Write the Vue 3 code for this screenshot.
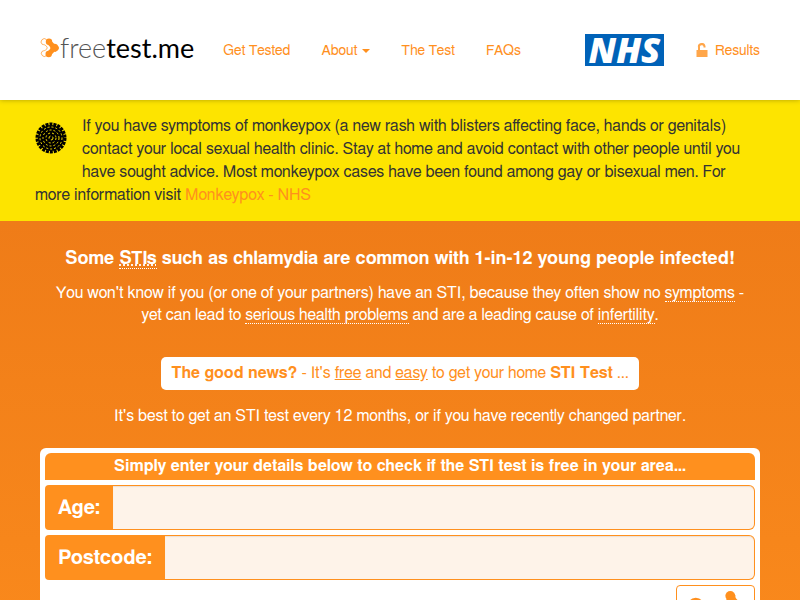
<template>
  <div class="page">
    <header class="navbar">
      <a class="brand" href="#" aria-label="freetest.me">
        <svg class="mark" viewBox="0 0 20 20" aria-hidden="true">
          <path class="outline" d="M6.500 1.500A3 3 0 1 0 2.200 6.300C4.500 7 5 6.500 6 8c1.500.6 1.700 2.900 0 3.600-1 1.200-1.500.9-3.600 1.500a3 3 0 1 0 4 4.600" />
          <path class="link" d="M9 4l5.500 6L8.700 16" />
          <circle cx="9" cy="3.700" r="3.200" />
          <circle cx="14.300" cy="9.800" r="4" />
          <circle cx="8.700" cy="16" r="3.200" />
          <path d="M15 6l3.500 2.500q1 1.500 0 3L15 14z" />
        </svg>
        <span class="wordmark"><span class="thin">free</span>test.me</span>
      </a>
      <nav class="menu">
        <a v-for="item in menu" :key="item.label" href="#">{{ item.label }}<span v-if="item.dropdown" class="caret"></span></a>
      </nav>
      <div class="account">
        <a class="nhs" href="#">NHS</a>
        <a class="results" href="#">
          <svg viewBox="0 0 12 14" aria-hidden="true">
            <path d="M2 7V4.500a3.500 3.500 0 0 1 7.500-1.500v1.500h-2V3.600A1.800 1.800 0 0 0 4 4.500V7h7.500v7H.5V7z" />
          </svg>
          <span>Results</span>
        </a>
      </div>
    </header>

    <section class="alert">
      <svg class="virus" viewBox="0 0 32 32" aria-hidden="true">
        <circle cx="16" cy="16" r="13" />
        <circle v-for="ring in rings" :key="ring.r" class="ring" cx="16" cy="16" :r="ring.r" :stroke-dasharray="ring.dash" />
        <circle class="spikes" cx="16" cy="16" r="14" />
      </svg>
      <p>
        If you have symptoms of monkeypox (a new rash with blisters affecting face, hands or genitals) contact your local sexual health clinic. Stay at home and avoid contact with other people until you have sought advice. Most monkeypox cases have been found among gay or bisexual men. For more information visit <a href="#">Monkeypox - NHS</a>
      </p>
    </section>

    <main class="hero">
      <h1>Some <abbr class="sti">STIs</abbr> such as chlamydia are common with 1-in-12 young people infected!</h1>
      <p class="lead">
        You won't know if you (or one of your partners) have an STI, because they often show no <abbr>symptoms</abbr> - yet can lead to <abbr>serious health problems</abbr> and are a leading cause of <abbr>infertility</abbr>.
      </p>
      <p class="news">
        <strong>The good news?</strong> - It's <u>free</u> and <u>easy</u> to get your home <strong>STI Test</strong> ...
      </p>
      <p class="advice">It's best to get an STI test every 12 months, or if you have recently changed partner.</p>

      <form class="check" @submit.prevent>
        <h2>Simply enter your details below to check if the STI test is free in your area...</h2>
        <div v-for="field in fields" :key="field.id" class="field">
          <label :for="field.id">{{ field.label }}</label>
          <input :id="field.id" v-model="field.value" type="text">
        </div>
        <button type="submit" aria-label="Go">
          <svg viewBox="0 0 78 50" aria-hidden="true">
            <circle cx="19" cy="21" r="9" />
            <circle cx="54" cy="10" r="5" />
            <path d="M50 13l9-4c0 4 2 5 5 6v30H53z" />
          </svg>
        </button>
      </form>
    </main>
  </div>
</template>

<script setup>
import { reactive } from 'vue';

const menu = [
  { label: 'Get Tested' },
  { label: 'About', dropdown: true },
  { label: 'The Test' },
  { label: 'FAQs' }
];

const rings = [
  { r: 2, dash: '3 2' },
  { r: 5, dash: '2 2' },
  { r: 8, dash: '2 2' },
  { r: 11, dash: '2 2' }
];

const fields = reactive([
  { id: 'age', label: 'Age:', value: '' },
  { id: 'postcode', label: 'Postcode:', value: '' }
]);
</script>

<style>
body { margin: 0; background: #ff901e; }
</style>

<style scoped>
* { box-sizing: border-box; }
.page { font-family: FreeSans, "Liberation Sans", Arial, sans-serif; font-size: 16px; line-height: 23px; color: #333; }
a { color: #ff901e; text-decoration: none; }
p, h1, h2 { margin: 0; }

.navbar { position: relative; z-index: 1; display: flex; align-items: center; height: 100px; padding: 0 40px; background: #fff; box-shadow: 0 0 5px rgba(0,0,0,0.3); font-size: 14px; line-height: 20px; }
.brand { display: flex; align-items: center; padding-bottom: 4px; color: #000; }
.mark { width: 20px; height: 20px; fill: #ff901e; }
.mark .outline { fill: none; stroke: #ff901e; stroke-width: 0.7; }
.mark .link { fill: none; stroke: #ff901e; stroke-width: 5; }
.wordmark { font-family: Lato, sans-serif; font-size: 27px; line-height: 32px; }
.thin { font-weight: 300; color: #555; }
.menu { display: flex; gap: 31px; margin-left: 29px; padding-top: 2px; }
.caret { display: inline-block; margin-left: 5px; vertical-align: middle; border-top: 4px solid; border-left: 4px solid transparent; border-right: 4px solid transparent; }
.account { display: flex; align-items: center; gap: 32px; margin-left: auto; }
.nhs { width: 79px; height: 32px; background: #0062b8; color: #fff; font-family: "Open Sans", sans-serif; font-size: 35px; font-weight: 800; font-style: italic; line-height: 32px; text-align: center; }
.results { display: flex; align-items: center; gap: 7px; }
.results svg { width: 12px; height: 14px; fill: #ff901e; opacity: 0.8; }
.results span { padding-top: 2px; }

.alert { padding: 15px 40px 14px 35px; background: #fde400; }
.virus { float: left; width: 32px; height: 32px; margin: 7px 15px 20px 0; }
.ring { fill: none; stroke: #fde400; stroke-width: 1; }
.spikes { fill: none; stroke: #000; stroke-width: 3; stroke-dasharray: 3 1; }

.hero { padding: 27px 40px 40px; background: linear-gradient(#ef7c18, #ff901e 640px); color: #fff; text-align: center; }
h1 { font-size: 18px; line-height: 22px; }
abbr { border-bottom: 1px dotted #fff; }
.sti { text-decoration: underline dotted; }
.lead { margin-top: 12px; padding: 0 8px; line-height: 22px; }
.news { width: fit-content; margin: 31px auto 0; padding: 5px 10px; border-radius: 5px; background: #fff; color: #ff901e; }
.advice { margin-top: 15px; }

.check { display: flex; flex-direction: column; gap: 5px; margin-top: 20px; padding: 5px; border-radius: 6px; background: #fff; }
h2 { padding: 2px 10px; border-radius: 6px 6px 0 0; background: #ff901e; font-size: 16px; line-height: 23px; }
.field { display: flex; height: 45px; }
.field label { padding: 0 13px; border-radius: 4px 0 0 4px; background: #ff901e; font-size: 20px; font-weight: bold; line-height: 46px; }
.field input { flex: 1; min-width: 0; padding: 6px 12px; border: 1px solid #ff901e; border-left: 0; border-radius: 0 6px 6px 0; background: #fef3e9; box-shadow: inset 0 1px 1px rgba(0,0,0,0.08); font: inherit; font-size: 20px; outline: none; }
.check button { align-self: flex-end; width: 79px; height: 50px; padding: 0; border: 1px solid #ff901e; border-radius: 4px; background: #fff; }
.check button svg { display: block; width: 100%; fill: #ff901e; }
</style>
